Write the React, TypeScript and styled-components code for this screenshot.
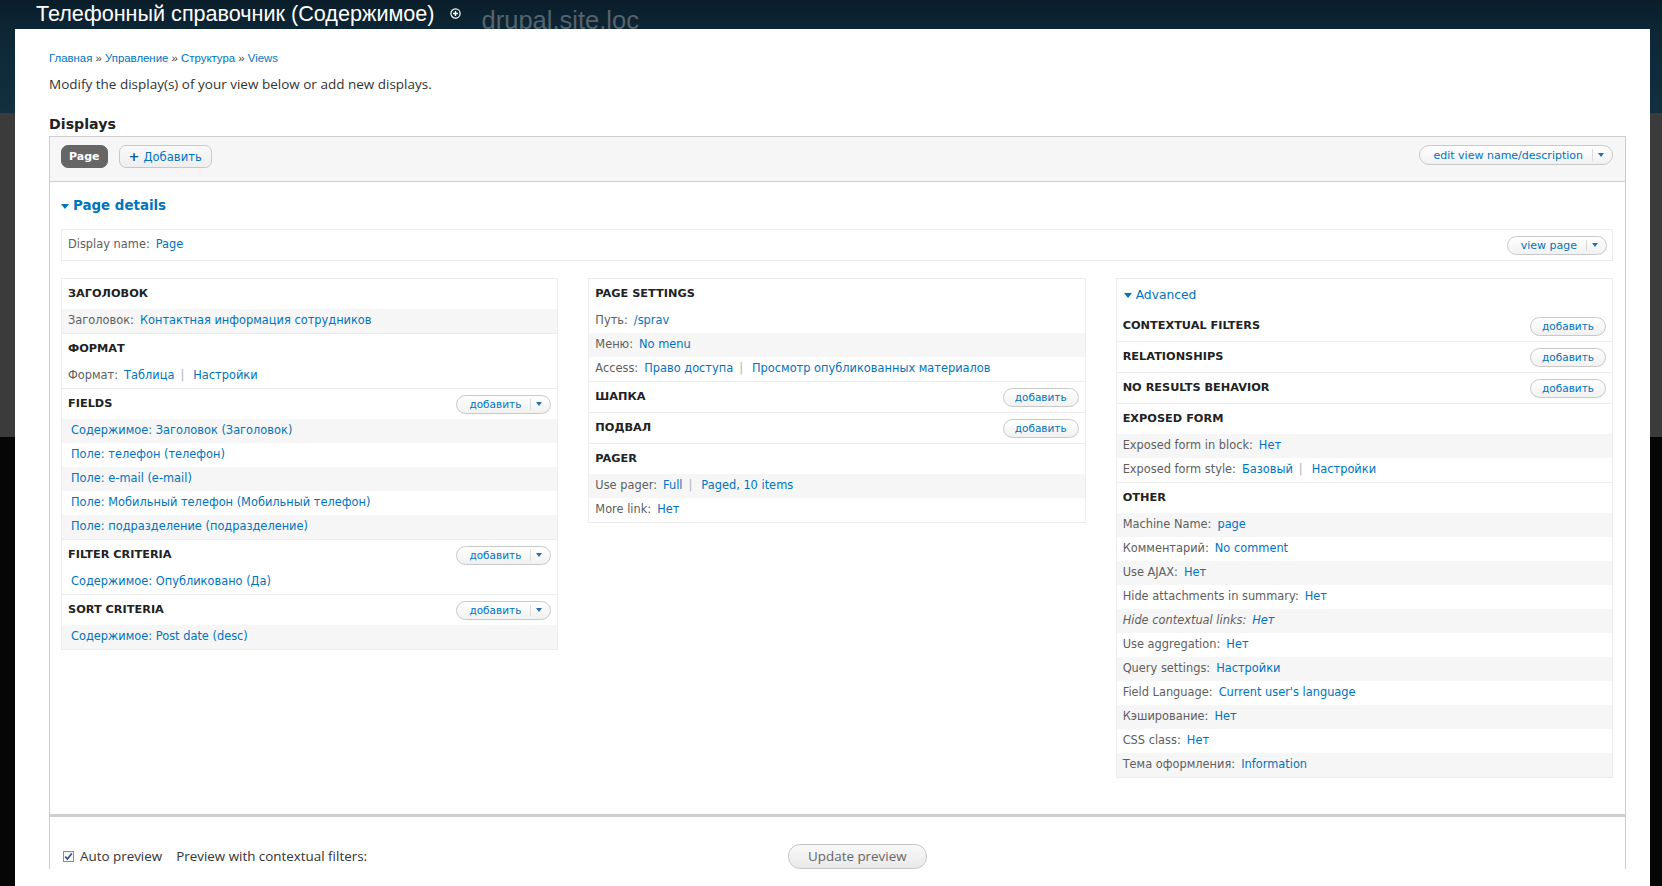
import React from 'react';
import styled, { createGlobalStyle } from 'styled-components';

const Global = createGlobalStyle`
  html, body { margin: 0; padding: 0; background: #fff; }
  body { font-family: "DejaVu Sans", sans-serif; }
  * { box-sizing: border-box; }
`;

const LINK = '#0074bd';

const Screen = styled.div`
  width: 1662px;
  height: 886px;
  overflow: hidden;
  display: flex;
  flex-direction: column;
`;

const TopBar = styled.header`
  height: 29px;
  flex: none;
  display: flex;
  align-items: flex-start;
  padding-left: 36px;
  background: linear-gradient(#0a1d29, #0d2636);
  overflow: hidden;
`;

const Title = styled.h1`
  margin: 0;
  font: 400 21.6px/28px "Liberation Sans", Arial, sans-serif;
  color: #fff;
  white-space: nowrap;
`;

const ShortcutIcon = styled.svg`
  flex: none;
  margin: 8px 0 0 15px;
`;

const SiteName = styled.span`
  margin: 8px 0 0 21px;
  font: 400 25.5px/25px "Liberation Sans", Arial, sans-serif;
  color: #55636d;
  white-space: nowrap;
`;

const Body = styled.div`
  flex: 1;
  min-height: 0;
  display: flex;
`;

const Gutter = styled.div<{ $w: number }>`
  flex: none;
  width: ${(p) => p.$w}px;
  background: linear-gradient(
    to bottom,
    #0d2636 0,
    #12303f 84px,
    #3b3b3b 84px,
    #3b3b3b 408px,
    #060606 408px
  );
`;

const Panel = styled.main`
  flex: 1;
  min-width: 0;
  background: #fff;
  padding: 21px 24px 0 34px;
  overflow: hidden;
`;

const Breadcrumb = styled.nav`
  font: 400 11.4px/16px "Liberation Sans", Arial, sans-serif;
  color: #444;
  a { color: ${LINK}; text-decoration: none; }
`;

const Intro = styled.p`
  margin: 9px 0 0;
  font: 400 13.5px/18px "Open Sans", "Liberation Sans", sans-serif;
  color: #333;
`;

const Heading = styled.h2`
  margin: 21px 0 2px;
  font: 700 14.2px/20px "DejaVu Sans", sans-serif;
  color: #222;
`;

const DisplayBox = styled.section`
  border: 1px solid #cdcdcd;
  border-bottom: none;
  background: #fff;
`;

const TabBar = styled.div`
  height: 45px;
  display: flex;
  align-items: flex-start;
  gap: 11px;
  padding: 8px 12px 0 11px;
  background: #f6f6f6;
  border-bottom: 1px solid #cdcdcd;
`;

const Tab = styled.span<{ $active?: boolean }>`
  display: inline-flex;
  align-items: center;
  gap: 4px;
  height: 23px;
  padding: 0 ${(p) => (p.$active ? 7 : 9)}px;
  border-radius: 7px;
  font: ${(p) => (p.$active ? '700 11px' : '400 11.6px')} "DejaVu Sans", sans-serif;
  color: ${(p) => (p.$active ? '#fff' : LINK)};
  background: ${(p) => (p.$active ? '#666' : 'linear-gradient(#fafafa, #eeeeee)')};
  border: 1px solid ${(p) => (p.$active ? '#666' : '#c8c8c8')};
`;

const Plus = styled.span`
  font: 700 13px/1 "DejaVu Sans", sans-serif;
  color: #0a5a96;
  margin-top: -1px;
`;

const Spacer = styled.div`
  flex: 1;
`;

const Pill = styled.span<{ $h: number; $size: number }>`
  display: inline-flex;
  align-items: center;
  height: ${(p) => p.$h}px;
  border: 1px solid #c9c9c9;
  border-radius: ${(p) => p.$h / 2}px;
  background: linear-gradient(#ffffff, #f1f1f1);
  font: 400 ${(p) => p.$size}px/1 "DejaVu Sans", sans-serif;
  color: ${LINK};
  white-space: nowrap;
  flex: none;
`;

const PillLabel = styled.span<{ $pl: number; $pr: number }>`
  padding: 0 ${(p) => p.$pr}px 0 ${(p) => p.$pl}px;
`;

const PillArrow = styled.span`
  align-self: stretch;
  display: flex;
  align-items: center;
  padding: 0 8px 0 5px;
  border-left: 1px solid #dcdcdc;
  margin: 3px 0;
  &::after {
    content: '';
    border-left: 3px solid transparent;
    border-right: 3px solid transparent;
    border-top: 4px solid #2a6fa8;
  }
`;

const Details = styled.div`
  padding: 14px 12px 36px 11px;
  border-bottom: 3px solid #cfcfcf;
`;

const Legend = styled.div`
  display: flex;
  align-items: center;
  gap: 4px;
  height: 20px;
  font: 700 13.4px/20px "DejaVu Sans", sans-serif;
  color: ${LINK};
`;

const Caret = styled.span<{ $size: number }>`
  flex: none;
  border-left: ${(p) => p.$size}px solid transparent;
  border-right: ${(p) => p.$size}px solid transparent;
  border-top: ${(p) => p.$size + 1}px solid ${LINK};
`;

const NameBar = styled.div`
  margin-top: 13px;
  height: 32px;
  display: flex;
  align-items: center;
  padding: 0 5px 0 6px;
  border: 1px solid #ececec;
  font: 400 11.4px/1 "DejaVu Sans", sans-serif;
  white-space: nowrap;
`;

const Columns = styled.div`
  margin-top: 17px;
  display: grid;
  grid-template-columns: 1fr 1fr 1fr;
  gap: 30px;
  align-items: start;
`;

const Column = styled.div`
  border: 1px solid #ececec;
  background: #fff;
`;

const Section = styled.div`
  & + & { border-top: 1px solid #ececec; }
`;

const SectionHead = styled.div`
  height: 30px;
  display: flex;
  align-items: center;
  justify-content: space-between;
  padding: 0 6px 0 6px;
`;

const SectionTitle = styled.span`
  font: 700 11.3px/1 "DejaVu Sans", sans-serif;
  color: #222;
`;

const AdvancedToggle = styled.div`
  height: 32px;
  display: flex;
  align-items: center;
  gap: 4px;
  padding-left: 7px;
  font: 400 12.3px/1 "DejaVu Sans", sans-serif;
  color: ${LINK};
`;

const Row = styled.div<{ $alt?: boolean; $indent?: boolean; $italic?: boolean }>`
  height: 24px;
  display: flex;
  align-items: center;
  padding-left: ${(p) => (p.$indent ? 9 : 6)}px;
  background: ${(p) => (p.$alt ? '#f6f6f6' : 'transparent')};
  font: ${(p) => (p.$italic ? 'italic' : 'normal')} 400 11.4px/1 "DejaVu Sans", sans-serif;
  white-space: nowrap;
`;

const Label = styled.span`
  color: #5e5e5e;
`;

const Value = styled.span`
  color: ${LINK};
  margin-left: 6px;
`;

const Pipe = styled.span`
  color: #b0b0b0;
  margin: 0 3px 0 6px;
`;

const LinkText = styled.span`
  color: ${LINK};
`;

const PreviewBar = styled.div`
  display: flex;
  align-items: center;
  padding: 27px 0 0 13px;
  font: 400 13.4px/1 "Open Sans", "Liberation Sans", sans-serif;
  color: #333;
`;

const CheckBox = styled.span`
  width: 11px;
  height: 11px;
  flex: none;
  border: 1px solid #8c8c8c;
  background: linear-gradient(#f2f2f2, #fff);
  display: flex;
  align-items: center;
  justify-content: center;
`;

const CheckLabel = styled.span`
  margin-left: 6px;
`;

const ContextLabel = styled.span`
  margin-left: 14px;
`;

const UpdateButton = styled.span`
  margin-left: 421px;
  height: 25px;
  padding: 0 19px;
  display: inline-flex;
  align-items: center;
  border: 1px solid #c6c6c6;
  border-radius: 12px;
  background: linear-gradient(#f9f9f9, #e9e9e9);
  font: 400 13.4px/1 "Open Sans", "Liberation Sans", sans-serif;
  color: #666;
`;

type Item = {
  label?: string;
  values?: string[];
  link?: string;
  alt?: boolean;
  italic?: boolean;
};

type Sec = {
  title: string;
  button?: 'split' | 'plain';
  items: Item[];
};

const col1: Sec[] = [
  { title: 'ЗАГОЛОВОК', items: [{ label: 'Заголовок:', values: ['Контактная информация сотрудников'], alt: true }] },
  { title: 'ФОРМАТ', items: [{ label: 'Формат:', values: ['Таблица', 'Настройки'] }] },
  {
    title: 'FIELDS',
    button: 'split',
    items: [
      { link: 'Содержимое: Заголовок (Заголовок)', alt: true },
      { link: 'Поле: телефон (телефон)' },
      { link: 'Поле: e-mail (e-mail)', alt: true },
      { link: 'Поле: Мобильный телефон (Мобильный телефон)' },
      { link: 'Поле: подразделение (подразделение)', alt: true },
    ],
  },
  { title: 'FILTER CRITERIA', button: 'split', items: [{ link: 'Содержимое: Опубликовано (Да)' }] },
  { title: 'SORT CRITERIA', button: 'split', items: [{ link: 'Содержимое: Post date (desc)', alt: true }] },
];

const col2: Sec[] = [
  {
    title: 'PAGE SETTINGS',
    items: [
      { label: 'Путь:', values: ['/sprav'] },
      { label: 'Меню:', values: ['No menu'], alt: true },
      { label: 'Access:', values: ['Право доступа', 'Просмотр опубликованных материалов'] },
    ],
  },
  { title: 'ШАПКА', button: 'plain', items: [] },
  { title: 'ПОДВАЛ', button: 'plain', items: [] },
  {
    title: 'PAGER',
    items: [
      { label: 'Use pager:', values: ['Full', 'Paged, 10 items'], alt: true },
      { label: 'More link:', values: ['Нет'] },
    ],
  },
];

const col3: Sec[] = [
  { title: 'CONTEXTUAL FILTERS', button: 'plain', items: [] },
  { title: 'RELATIONSHIPS', button: 'plain', items: [] },
  { title: 'NO RESULTS BEHAVIOR', button: 'plain', items: [] },
  {
    title: 'EXPOSED FORM',
    items: [
      { label: 'Exposed form in block:', values: ['Нет'], alt: true },
      { label: 'Exposed form style:', values: ['Базовый', 'Настройки'] },
    ],
  },
  {
    title: 'OTHER',
    items: [
      { label: 'Machine Name:', values: ['page'], alt: true },
      { label: 'Комментарий:', values: ['No comment'] },
      { label: 'Use AJAX:', values: ['Нет'], alt: true },
      { label: 'Hide attachments in summary:', values: ['Нет'] },
      { label: 'Hide contextual links:', values: ['Нет'], alt: true, italic: true },
      { label: 'Use aggregation:', values: ['Нет'] },
      { label: 'Query settings:', values: ['Настройки'], alt: true },
      { label: 'Field Language:', values: ["Current user's language"] },
      { label: 'Кэширование:', values: ['Нет'], alt: true },
      { label: 'CSS class:', values: ['Нет'] },
      { label: 'Тема оформления:', values: ['Information'], alt: true },
    ],
  },
];

function SplitButton({ text, h, pl, pr, size }: { text: string; h: number; pl: number; pr: number; size: number }) {
  return (
    <Pill $h={h} $size={size}>
      <PillLabel $pl={pl} $pr={pr}>{text}</PillLabel>
      <PillArrow />
    </Pill>
  );
}

function PlainButton({ text }: { text: string }) {
  return (
    <Pill $h={19} $size={10.5}>
      <PillLabel $pl={11} $pr={11}>{text}</PillLabel>
    </Pill>
  );
}

function ItemRow({ item }: { item: Item }) {
  if (item.link) {
    return (
      <Row $alt={item.alt} $indent>
        <LinkText>{item.link}</LinkText>
      </Row>
    );
  }
  return (
    <Row $alt={item.alt} $italic={item.italic}>
      <Label>{item.label}</Label>
      {item.values?.map((v, i) => (
        <React.Fragment key={v}>
          {i > 0 && <Pipe>|</Pipe>}
          <Value>{v}</Value>
        </React.Fragment>
      ))}
    </Row>
  );
}

function SectionBlock({ sec }: { sec: Sec }) {
  return (
    <Section>
      <SectionHead>
        <SectionTitle>{sec.title}</SectionTitle>
        {sec.button === 'split' && <SplitButton text="добавить" h={19} pl={12} pr={9} size={10.5} />}
        {sec.button === 'plain' && <PlainButton text="добавить" />}
      </SectionHead>
      {sec.items.map((it, i) => (
        <ItemRow key={i} item={it} />
      ))}
    </Section>
  );
}

export default function App() {
  return (
    <>
      <Global />
      <Screen>
        <TopBar>
          <Title>Телефонный справочник (Содержимое)</Title>
          <ShortcutIcon width="11" height="11" viewBox="0 0 11 11">
            <circle cx="5.5" cy="5.5" r="4.6" fill="none" stroke="#fff" strokeWidth="1.2" />
            <path d="M5.5 3v5M3 5.5h5" stroke="#fff" strokeWidth="1.4" />
          </ShortcutIcon>
          <SiteName>drupal.site.loc</SiteName>
        </TopBar>
        <Body>
          <Gutter $w={15} />
          <Panel>
            <Breadcrumb>
              <a>Главная</a> » <a>Управление</a> » <a>Структура</a> » <a>Views</a>
            </Breadcrumb>
            <Intro>Modify the display(s) of your view below or add new displays.</Intro>
            <Heading>Displays</Heading>
            <DisplayBox>
              <TabBar>
                <Tab $active>Page</Tab>
                <Tab>
                  <Plus>+</Plus>Добавить
                </Tab>
                <Spacer />
                <SplitButton text="edit view name/description" h={20} pl={13} pr={9} size={11} />
              </TabBar>
              <Details>
                <Legend>
                  <Caret $size={4} />
                  Page details
                </Legend>
                <NameBar>
                  <Label>Display name:</Label>
                  <Value>Page</Value>
                  <Spacer />
                  <SplitButton text="view page" h={19} pl={13} pr={9} size={11} />
                </NameBar>
                <Columns>
                  <Column>
                    {col1.map((s) => (
                      <SectionBlock key={s.title} sec={s} />
                    ))}
                  </Column>
                  <Column>
                    {col2.map((s) => (
                      <SectionBlock key={s.title} sec={s} />
                    ))}
                  </Column>
                  <Column>
                    <AdvancedToggle>
                      <Caret $size={4} />
                      Advanced
                    </AdvancedToggle>
                    {col3.map((s) => (
                      <SectionBlock key={s.title} sec={s} />
                    ))}
                  </Column>
                </Columns>
              </Details>
              <PreviewBar>
                <CheckBox>
                  <svg width="9" height="9" viewBox="0 0 9 9">
                    <path d="M1.2 4.6l2.2 2.4L7.8 1.4" fill="none" stroke="#2b4f9c" strokeWidth="1.6" />
                  </svg>
                </CheckBox>
                <CheckLabel>Auto preview</CheckLabel>
                <ContextLabel>Preview with contextual filters:</ContextLabel>
                <UpdateButton>Update preview</UpdateButton>
              </PreviewBar>
            </DisplayBox>
          </Panel>
          <Gutter $w={12} />
        </Body>
      </Screen>
    </>
  );
}
